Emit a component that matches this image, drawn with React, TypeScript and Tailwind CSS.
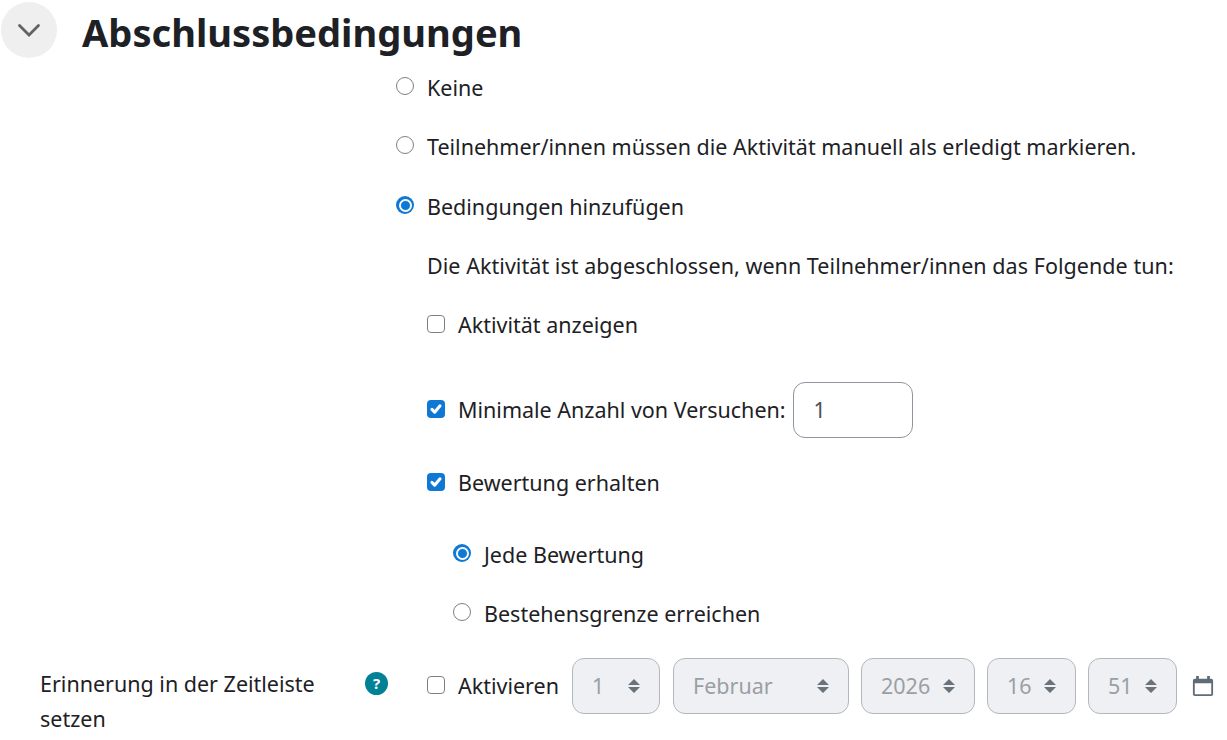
import React from 'react';

function Radio({ checked }: { checked?: boolean }) {
  if (checked) {
    return (
      <span className="mb-[4px] flex h-[18px] w-[18px] shrink-0 items-center justify-center rounded-full bg-[#0f78d4]">
        <span className="h-[11px] w-[11px] rounded-full border-[1px] border-white bg-[#0f78d4] ring-[1px] ring-white" />
      </span>
    );
  }
  return <span className="mb-[4px] h-[18px] w-[18px] shrink-0 rounded-full border-[1.5px] border-[#808080] bg-white" />;
}

function Checkbox({ checked }: { checked?: boolean }) {
  if (checked) {
    return (
      <span className="mb-[3px] flex h-[18px] w-[18px] shrink-0 items-center justify-center rounded-[4px] bg-[#0f78d4]">
        <svg viewBox="0 0 20 20" className="h-[18px] w-[18px]" fill="none" stroke="#fff" strokeWidth="3.4" strokeLinecap="round" strokeLinejoin="round">
          <path d="M5.5 10.5l3 3 6-7" />
        </svg>
      </span>
    );
  }
  return <span className="mb-[3px] h-[18px] w-[18px] shrink-0 rounded-[4px] border-[1.5px] border-[#808080] bg-white" />;
}

function Sort() {
  return (
    <svg viewBox="0 0 12 16" className="h-[16px] w-[12px] shrink-0" fill="#6a737b">
      <path d="M6 1l6 6H0zM6 15L0 9h12z" />
    </svg>
  );
}

function SelectBox({ value, width }: { value: string; width: string }) {
  return (
    <div className={`flex h-[56px] items-center justify-between rounded-[12px] border border-[#b4b8bc] bg-[#eef0f3] pl-[19px] pr-[19px] text-[#9a9fa4] ${width}`}>
      <span>{value}</span>
      <Sort />
    </div>
  );
}

function Row({ control, label }: { control: React.ReactNode; label: string }) {
  return (
    <div className="flex h-[34px] items-center gap-[13px]">
      {control}
      <span>{label}</span>
    </div>
  );
}

export default function App() {
  return (
    <div className="h-[740px] w-[1227px] overflow-hidden bg-white font-['Noto_Sans',sans-serif] text-[21.5px] text-[#1d2125]">
      <div className="flex items-start pl-[1px] pt-[2px]">
        <button className="flex h-[56px] w-[56px] items-center justify-center rounded-full bg-[#efefef]">
          <svg viewBox="0 0 24 24" className="h-[24px] w-[24px]" fill="none" stroke="#5f6368" strokeWidth="2.8" strokeLinecap="round">
            <path d="M2.5 7.5l9.5 9.5 9.5-9.5" />
          </svg>
        </button>
        <h2 className="ml-[25px] mt-[2px] text-[38.1px] font-bold leading-[56px]">Abschlussbedingungen</h2>
      </div>

      <div className="ml-[396px] mt-[11px] flex flex-col">
        <Row control={<Radio />} label="Keine" />
        <div className="mt-[25px]">
          <Row control={<Radio />} label="Teilnehmer/innen müssen die Aktivität manuell als erledigt markieren." />
        </div>
        <div className="mt-[26px]">
          <Row control={<Radio checked />} label="Bedingungen hinzufügen" />
        </div>
        <div className="ml-[31px] mt-[25px] h-[34px] leading-[34px] tracking-[0.05px]">Die Aktivität ist abgeschlossen, wenn Teilnehmer/innen das Folgende tun:</div>
        <div className="ml-[31px] mt-[25px]">
          <Row control={<Checkbox />} label="Aktivität anzeigen" />
        </div>
        <div className="ml-[31px] mt-[40px] flex h-[56px] items-center">
          <Checkbox checked />
          <span className="ml-[13px]">Minimale Anzahl von Versuchen:</span>
          <div className="ml-[7px] flex h-[56px] w-[120px] items-center rounded-[12px] border border-[#8f959e] pl-[20px] text-[#495057]">1</div>
        </div>
        <div className="ml-[31px] mt-[28px]">
          <Row control={<Checkbox checked />} label="Bewertung erhalten" />
        </div>
        <div className="ml-[57px] mt-[38px]">
          <Row control={<Radio checked />} label="Jede Bewertung" />
        </div>
        <div className="ml-[57px] mt-[25px]">
          <Row control={<Radio />} label="Bestehensgrenze erreichen" />
        </div>
      </div>

      <div className="mt-[27px] flex items-start">
        <div className="flex w-[427px] pl-[40px]">
          <div className="w-[300px] pt-[8px] leading-[35px]">Erinnerung in der Zeitleiste setzen</div>
          <span className="ml-[25px] mt-[14px] flex h-[23px] w-[23px] items-center justify-center rounded-full bg-[#008196] text-[15px] font-bold leading-none text-white">?</span>
        </div>
        <div className="flex h-[56px] items-center">
          <Checkbox />
          <span className="ml-[13px]">Aktivieren</span>
          <div className="ml-[13px] flex items-center gap-[12px]">
            <SelectBox value="1" width="mr-[1px] w-[88px]" />
            <SelectBox value="Februar" width="w-[176px]" />
            <SelectBox value="2026" width="w-[114px]" />
            <SelectBox value="16" width="w-[89px]" />
            <SelectBox value="51" width="w-[89px]" />
          </div>
          <svg viewBox="0 0 24 24" className="ml-[15px] h-[24px] w-[22px] shrink-0">
            <path fill="#5f6b75" d="M4.5 1h3v3h9V1h3v3h1.500a2 2 0 0 1 2 2v15a2 2 0 0 1-2 2H3a2 2 0 0 1-2-2V6a2 2 0 0 1 2-2h1.500z" />
            <rect x="3" y="9" width="18" height="12" fill="#fff" />
          </svg>
        </div>
      </div>
    </div>
  );
}
